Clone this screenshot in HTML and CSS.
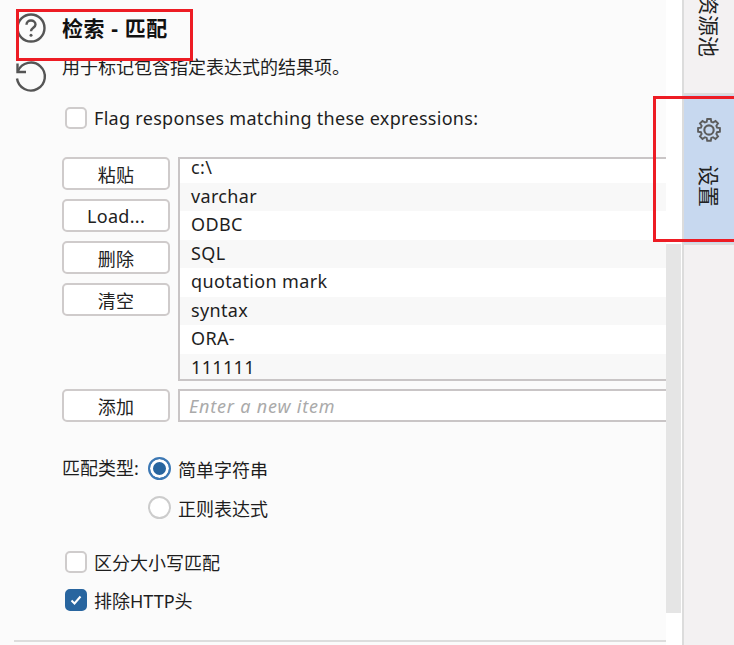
FILE: index.html
```html
<!DOCTYPE html>
<html lang="zh-CN">
<head>
    <meta charset="UTF-8">
    <title>检索 - 匹配</title>
    <link rel="stylesheet" href="styles.css">
</head>
<body>
    <div class="layout">
        <main class="panel">
            <div class="section">
                <div class="icons">
                    <svg class="icon" width="32" height="32" viewBox="0 0 32 32" fill="none" stroke="#555" stroke-width="2.400">
                        <circle cx="16" cy="16" r="13.500"/>
                        <path d="M11.500 12.800c0-2.700 2-4.300 4.500-4.300s4.500 1.600 4.500 3.900c0 3.300-4.500 3.300-4.500 6.800"/>
                        <circle cx="16" cy="23.200" r="1.500" fill="#555" stroke="none"/>
                    </svg>
                    <svg class="icon undo" width="34" height="34" viewBox="0 0 34 34" fill="none" stroke="#555" stroke-width="2.400">
                        <path d="M4 11A14 14 0 1 1 3 18.500"/>
                        <path d="M3.500 3.500v8.500h8.500"/>
                    </svg>
                </div>
                <div class="content">
                    <h1 class="title">检索 - 匹配</h1>
                    <p class="desc">用于标记包含指定表达式的结果项。</p>
                    <label class="check flag"><span class="box"></span>Flag responses matching these expressions:</label>

                    <div class="editor">
                        <div class="buttons">
                            <button class="btn">粘贴</button>
                            <button class="btn">Load...</button>
                            <button class="btn">删除</button>
                            <button class="btn">清空</button>
                        </div>
                        <ul class="list">
                            <li>c:\</li>
                            <li>varchar</li>
                            <li>ODBC</li>
                            <li>SQL</li>
                            <li>quotation mark</li>
                            <li>syntax</li>
                            <li>ORA-</li>
                            <li>111111</li>
                        </ul>
                    </div>
                    <div class="add-row">
                        <button class="btn">添加</button>
                        <div class="new-item">Enter a new item</div>
                    </div>

                    <div class="match-type">
                        <span class="match-label">匹配类型:</span>
                        <div class="radios">
                            <label class="radio"><span class="dot on"></span>简单字符串</label>
                            <label class="radio"><span class="dot"></span>正则表达式</label>
                        </div>
                    </div>

                    <label class="check case"><span class="box"></span>区分大小写匹配</label>
                    <label class="check excl"><span class="box on">
                        <svg width="14" height="14" viewBox="0 0 14 14" fill="none" stroke="#fff" stroke-width="2"><path d="M2.500 7.500l3 3 6-7"/></svg>
                    </span>排除HTTP头</label>
                </div>
            </div>
        </main>
        <div class="scrollbar"><div class="thumb"></div></div>
        <nav class="tabs">
            <div class="tab tab-first"><span class="tab-text">资源池</span></div>
            <div class="tab active">
                <svg width="28" height="28" viewBox="0 0 24 24" fill="none" stroke="#5c5c5c" stroke-width="1.800">
                    <path d="M10.300 2.500h3.400l.5 2.700 1.700.7 2.300-1.600 2.400 2.400-1.600 2.300.7 1.700 2.700.5v3.400l-2.700.5-.7 1.700 1.600 2.300-2.400 2.400-2.300-1.600-1.700.7-.5 2.700h-3.400l-.5-2.700-1.700-.7-2.300 1.600-2.400-2.400 1.600-2.300-.7-1.700-2.700-.5v-3.400l2.700-.5.7-1.700-1.600-2.300 2.400-2.400 2.300 1.600 1.700-.7z" transform="translate(12 12) scale(.9) translate(-12 -13)"/>
                    <circle cx="12" cy="12" r="4"/>
                </svg>
                <span class="tab-text">设置</span>
            </div>
        </nav>
    </div>

    <!-- annotation boxes on the screenshot -->
    <div class="mark mark-title"></div>
    <div class="mark mark-tab"></div>
</body>
</html>
```

FILE: styles.css
```css
* {
    box-sizing: border-box;
}
html, body {
    margin: 0;
    height: 100%;
    overflow: hidden;
}
body {
    font-family: "Noto Sans", "Noto Sans CJK SC", sans-serif;
    font-size: 18px;
    letter-spacing: .3px;
    color: #1e1e1e;
    background: #fff;
}
.layout {
    display: flex;
    height: 645px;
}
.panel {
    width: 667px;
    height: 645px;
    padding-left: 14px;
    background: #fbfbfb;
    overflow: hidden;
}
.section {
    display: flex;
    height: 642px;
    border-bottom: 2px solid #ddd;
}
.icons {
    width: 48px;
    padding-top: 12px;
    display: flex;
    flex-direction: column;
    align-items: flex-start;
}
.icon {
    margin-left: 1px;
}
.undo {
    margin-top: 16px;
    margin-left: 0;
}
.content {
    flex: 1;
}
.title {
    margin: 14px 0 0;
    height: 28px;
    font-size: 21px;
    line-height: 28px;
    font-weight: 700;
    letter-spacing: .6px;
    color: #111;
}
.desc {
    margin: 12px 0 0;
    height: 26px;
    line-height: 26px;
    letter-spacing: 0;
}
.check {
    display: flex;
    align-items: center;
    margin-left: 3px;
    height: 24px;
}
.box {
    width: 22px;
    height: 22px;
    margin-right: 7px;
    flex: none;
    display: flex;
    align-items: center;
    justify-content: center;
    background: #fff;
    border: 2px solid #cfcccc;
    border-radius: 5px;
}
.box.on {
    background: #28659f;
    border-color: #28659f;
}
.flag {
    margin-top: 26px;
}
.editor {
    display: flex;
    margin-top: 27px;
}
.buttons {
    width: 116px;
    display: flex;
    flex-direction: column;
    gap: 9px;
    flex: none;
}
.btn {
    width: 108px;
    height: 33px;
    padding: 0;
    flex: none;
    font: inherit;
    letter-spacing: inherit;
    color: #222;
    background: #fff;
    border: 2px solid #cfcbcb;
    border-radius: 5px;
}
.list {
    flex: 1;
    height: 224px;
    margin: 0;
    padding: 0;
    list-style: none;
    background: #fff;
    border: 2px solid #c9c5c6;
    border-right: 0;
    overflow: hidden;
}
.list li {
    height: 28.500px;
    padding-left: 11px;
    line-height: 26.500px;
    letter-spacing: .35px;
}
.list li:first-child {
    margin-top: -5px;
}
.list li:nth-child(even) {
    background: #f8f8f8;
}
.add-row {
    display: flex;
    gap: 8px;
    margin-top: 8px;
}
.new-item {
    flex: 1;
    height: 33px;
    padding-left: 9px;
    line-height: 31px;
    font-style: italic;
    letter-spacing: .8px;
    color: #aaa;
    background: #fff;
    border: 2px solid #c9c5c6;
    border-right: 0;
}
.match-type {
    display: flex;
    margin-top: 30px;
}
.match-label {
    width: 86px;
    line-height: 33px;
    letter-spacing: 0;
}
.radios {
    display: flex;
    flex-direction: column;
    gap: 6px;
}
.radio {
    display: flex;
    align-items: center;
    height: 33px;
    letter-spacing: 0;
}
.dot {
    width: 23px;
    height: 23px;
    margin-right: 7px;
    background: #fff;
    border: 2px solid #ccc;
    border-radius: 50%;
}
.dot.on {
    background: #28659f;
    border: 2px solid #3c78b4;
    box-shadow: inset 0 0 0 3px #fff;
}
.case {
    margin-top: 26px;
    letter-spacing: 0;
}
.excl {
    margin-top: 14px;
    letter-spacing: 0;
}
.scrollbar {
    width: 15px;
    padding-top: 244px;
    background: #fff;
}
.thumb {
    height: 369px;
    background: #e5e5e5;
}
.tabs {
    width: 52px;
    margin-left: 1px;
    background: #f3f1f2;
    border-left: 2px solid #dcdcdc;
}
.tab {
    display: flex;
    flex-direction: column;
    align-items: center;
    border-bottom: 2px solid #dcdcdc;
}
.tab-first {
    height: 95px;
    justify-content: flex-end;
    padding-bottom: 36px;
}
.tab.active {
    height: 150px;
    padding-top: 21px;
    background: #c7d8ef;
}
.tab-text {
    writing-mode: vertical-rl;
    text-orientation: sideways;
    font-size: 21px;
    line-height: 24px;
    letter-spacing: 0;
    white-space: nowrap;
    color: #222;
}
.active .tab-text {
    margin-top: 21px;
}
.mark {
    position: absolute;
    border: 3px solid #ed1c24;
}
.mark-title {
    left: 16px;
    top: 9px;
    width: 177px;
    height: 52px;
}
.mark-tab {
    left: 653px;
    top: 96px;
    width: 81px;
    height: 146px;
    border-right: 0;
}
```
